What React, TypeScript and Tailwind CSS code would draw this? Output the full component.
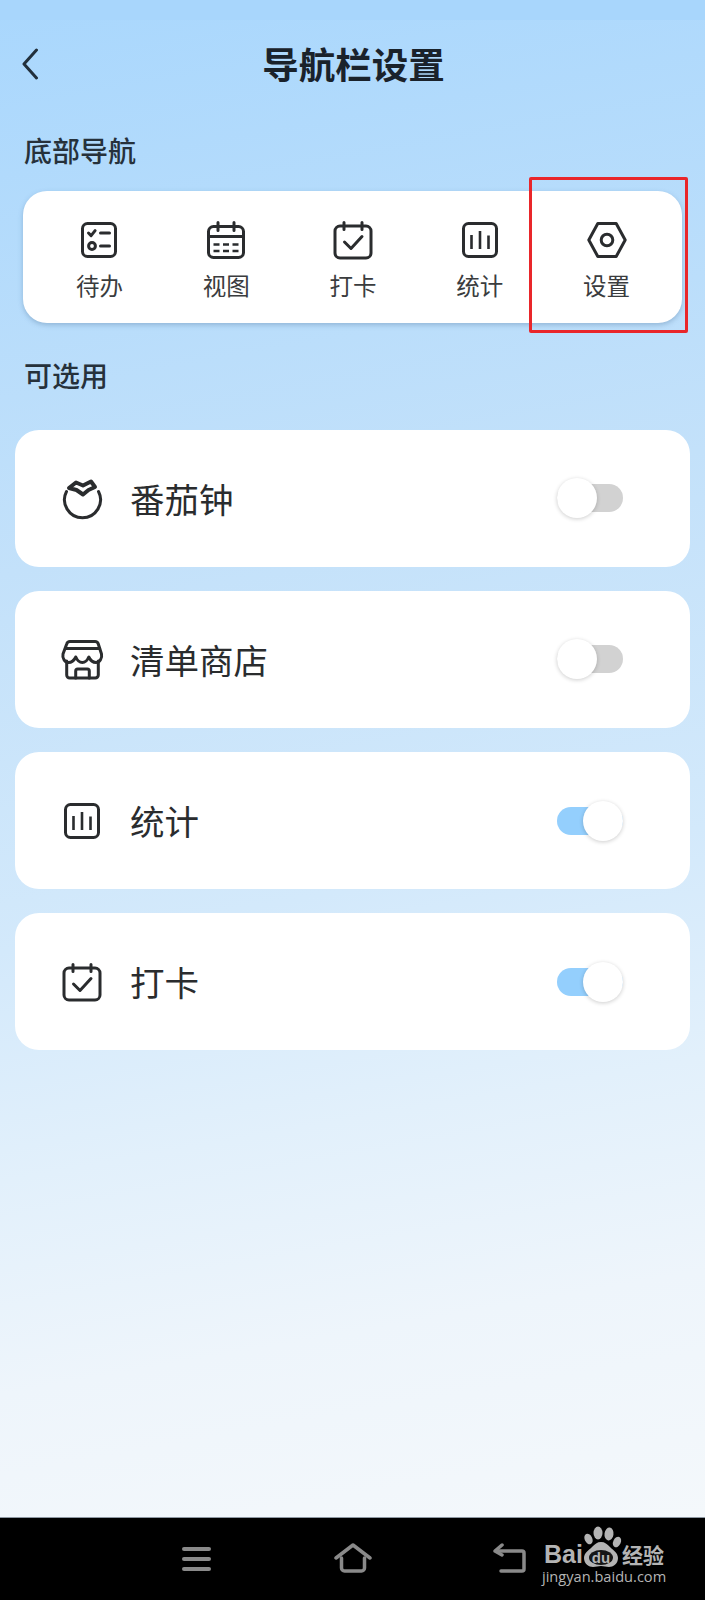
const cjk = { fontFamily: '"Noto Sans CJK SC", "Noto Sans", sans-serif' };

type IconProps = { className?: string };

function Svg({ children, className }: { children: React.ReactNode; className?: string }) {
  return (
    <svg viewBox="0 0 40 40" className={className ?? "h-10 w-10 overflow-visible"} fill="none" stroke="#2a2c2e" strokeWidth={3} strokeLinecap="round" strokeLinejoin="round">
      {children}
    </svg>
  );
}

function TasksIcon({ className }: IconProps) {
  return (
    <Svg className={className}>
      <rect x="3.5" y="3.5" width="33" height="33" rx="5" />
      <path d="M9.5 13l2.6 2.6 4-5" />
      <path d="M21.5 13h9M21.5 26h9" />
      <circle cx="13" cy="26" r="3.4" />
    </Svg>
  );
}

function CalendarIcon({ className }: IconProps) {
  return (
    <Svg className={className}>
      <rect x="2.5" y="6.5" width="35" height="31" rx="5" />
      <path d="M12 2.5v8M28 2.5v8" />
      <path d="M3 16.5h34" />
      <path d="M7.500 24.500h6M17 24.500h6M26.500 24.500h6M7.500 31h6M17 31h6M26.500 31h6" strokeLinecap="butt" strokeWidth={2.6} />
    </Svg>
  );
}

function CheckIcon({ className }: IconProps) {
  return (
    <Svg className={className}>
      <rect x="2" y="6" width="36" height="32" rx="5" />
      <path d="M11 2.5v7M29 2.5v7" />
      <path d="M11.500 22l6.500 6.500L29 16.500" />
    </Svg>
  );
}

function StatsIcon({ className }: IconProps) {
  return (
    <Svg className={className}>
      <rect x="3.5" y="3.5" width="33" height="33" rx="5" />
      <path d="M11.500 15v14M20 11v18M28.500 15.500v13.500" strokeWidth={2.6} strokeLinecap="butt" />
    </Svg>
  );
}

function HexIcon({ className }: IconProps) {
  return (
    <Svg className={className}>
      <path d="M1.800 20L10.800 3.500h18.400L38.200 20l-9 16.500H10.800z" />
      <circle cx="20" cy="20" r="5.800" />
    </Svg>
  );
}

function TomatoIcon({ className }: IconProps) {
  return (
    <Svg className={className}>
      <path d="M4.500 12.500A18 18 0 1 0 36.500 12.500" />
      <path d="M7 9L14 3.500 21 6.500 29 2.500 33 8 26.500 11 21 15.500 14.500 11z" fill="#fff" strokeWidth={4} />
    </Svg>
  );
}

function StoreIcon({ className }: IconProps) {
  return (
    <Svg className={className}>
      <path d="M4.700 21V35a3 3 0 0 0 3 3h25.600a3 3 0 0 0 3-3V21" />
      <path d="M8 1.500H33a3.500 3.500 0 0 1 3.300 2.500L39.500 14c1 4.500-2 8.500-5.500 8.500-3 0-5.500-2-7.200-5.500-1.500 3.500-3.800 5.500-6.500 5.500s-5-2-6.500-5.500C12 20.500 9.500 22.500 6.500 22.500 3 22.500 0 18.500 1 14L4.700 4A3.500 3.500 0 0 1 8 1.500z" />
      <path d="M3.500 8.500H37.500" />
      <path d="M13.700 38V31a2 2 0 0 1 2-2h9.600a2 2 0 0 1 2 2V38" />
    </Svg>
  );
}

function Toggle({ on }: { on: boolean }) {
  return (
    <div className={`relative h-10 w-[66px] shrink-0 ${on ? "mt-0" : "-mt-[2px]"}`}>
      <div className={`absolute inset-x-0 top-[6px] h-7 rounded-full ${on ? "bg-[#94cffd]" : "bg-[#d2d2d2]"}`} />
      <div className={`absolute top-0 h-10 w-10 rounded-full bg-white shadow-[0_1px_4px_rgba(0,0,0,0.2)] ${on ? "right-0" : "left-0"}`} />
    </div>
  );
}

function OptionRow({ icon, label, on }: { icon: React.ReactNode; label: string; on: boolean }) {
  return (
    <div className="flex h-[137px] items-center rounded-[24px] bg-white pl-[47px] pr-[67px]">
      <div className="h-10 w-10 shrink-0">{icon}</div>
      <span className="-mt-[2px] ml-[28px] flex-1 text-[34.5px] leading-[44px] text-[#2a2c2e]">{label}</span>
      <Toggle on={on} />
    </div>
  );
}

const navItems = [
  { label: "待办", icon: <TasksIcon /> },
  { label: "视图", icon: <CalendarIcon /> },
  { label: "打卡", icon: <CheckIcon /> },
  { label: "统计", icon: <StatsIcon /> },
  { label: "设置", icon: <HexIcon /> },
];

function BaiduMark() {
  return (
    <div className="absolute left-[541px] top-[7px] h-[66px] w-[130px] text-[#b4b4b4]">
      <span className="absolute left-[3px] top-[16px] text-[25px] font-bold leading-[26px]" style={{ fontFamily: '"Liberation Sans", sans-serif' }}>Bai</span>
      <svg viewBox="0 0 40 44" className="absolute left-[42px] top-0 h-[44px] w-[40px]">
        <g fill="#b4b4b4">
          <ellipse cx="15" cy="8" rx="4.500" ry="6.500" />
          <ellipse cx="26" cy="9" rx="4.500" ry="6.500" transform="rotate(8 26 9)" />
          <ellipse cx="5.500" cy="14" rx="3.800" ry="5.500" transform="rotate(-25 5.500 14)" />
          <ellipse cx="34" cy="17" rx="3.800" ry="5.500" transform="rotate(25 34 17)" />
          <path d="M18 17c4 0 6 2 9 5 3 3 8 6 8 11 0 6-5 9-9 9-3 0-5-1-8-1s-5 1-8 1c-4 0-9-3-9-9 0-5 5-8 8-11 3-3 5-5 9-5z" />
        </g>
        <ellipse cx="18" cy="32.500" rx="12" ry="7.500" fill="#161616" />
        <text x="18" y="37.500" textAnchor="middle" fontSize="15" fontWeight="700" fill="#b4b4b4" fontFamily="Liberation Sans, sans-serif">du</text>
      </svg>
      <span className="absolute left-[81px] top-[16px] text-[21px] font-bold leading-[26px]" style={cjk}>经验</span>
      <span className="absolute left-px top-[41px] text-[14.6px] leading-[20px]" style={{ fontFamily: '"Open Sans", sans-serif' }}>jingyan.baidu.com</span>
    </div>
  );
}

export default function App() {
  return (
    <div className="relative flex h-[1600px] w-[705px] flex-col overflow-hidden" style={cjk}>
      <main className="flex flex-1 flex-col bg-[linear-gradient(170deg,#a9d7fd_0%,#c3e1fa_35%,#d3e9fb_58%,#e2f0fb_72%,#eef5fb_85%,#f4f8fb_100%)]">
        <div className="h-5 bg-[#a8d6fc]" />
        <header className="relative flex h-[90px] items-center justify-center">
          <svg viewBox="0 0 18 32" className="absolute left-[21px] top-[28px] h-8 w-[18px]" fill="none" stroke="#22303c" strokeWidth={3} strokeLinecap="round" strokeLinejoin="round">
            <path d="M15.500 2L3 16l12.500 14" />
          </svg>
          <h1 className="-mt-[2px] ml-[2px] text-[36.5px] font-bold leading-[48px] text-[#1a222b]">导航栏设置</h1>
        </header>
        <h2 className="ml-6 mt-[20px] text-[28px] font-medium leading-[40px] text-[#26313b]">底部导航</h2>
        <section className="relative ml-[23px] mt-[21px] grid h-[132px] w-[659px] grid-cols-5 rounded-[24px] bg-white pl-[13px] pr-[12px] pt-[29px] shadow-[0_2px_5px_rgba(70,110,150,0.35)]">
          {navItems.map((item) => (
            <div key={item.label} className="flex flex-col items-center">
              {item.icon}
              <span className="mt-[9px] text-[23.5px] leading-[32px] text-[#3a3c3e]">{item.label}</span>
            </div>
          ))}
        </section>
        <h2 className="ml-6 mt-[32px] text-[28px] font-medium leading-[40px] text-[#26313b]">可选用</h2>
        <div className="mx-[15px] mt-[35px] flex flex-col gap-6">
          <OptionRow icon={<TomatoIcon />} label="番茄钟" on={false} />
          <OptionRow icon={<StoreIcon />} label="清单商店" on={false} />
          <OptionRow icon={<StatsIcon />} label="统计" on />
          <OptionRow icon={<CheckIcon />} label="打卡" on />
        </div>
      </main>
      <footer className="relative h-[83px] border-t border-[#8e98a2] bg-black">
        <div className="absolute left-[182px] top-[29px] flex w-[29px] flex-col gap-[6px]">
          <div className="h-1 rounded-full bg-[#8a8a8a]" />
          <div className="h-1 rounded-full bg-[#8a8a8a]" />
          <div className="h-1 rounded-full bg-[#8a8a8a]" />
        </div>
        <svg viewBox="0 0 38 30" className="absolute left-[334px] top-[25px] h-[30px] w-[38px]" fill="none" stroke="#8a8a8a" strokeWidth={3.5} strokeLinecap="round" strokeLinejoin="round">
          <path d="M2 15L19 2l17 13" />
          <path d="M7.500 15v10a3 3 0 0 0 3 3h17a3 3 0 0 0 3-3V15" />
        </svg>
        <svg viewBox="0 0 34 30" className="absolute left-[493px] top-[25px] h-[30px] w-[34px]" fill="none" stroke="#8a8a8a" strokeWidth={3.5} strokeLinecap="round" strokeLinejoin="round">
          <path d="M9 2L2 8l7 4" />
          <path d="M3 8h26a2 2 0 0 1 2 2v16a2 2 0 0 1-2 2H8" />
        </svg>
        <BaiduMark />
      </footer>
      <div className="absolute left-[529px] top-[177px] h-[156px] w-[159px] rounded-[2px] border-[3px] border-[#e9262a]" />
    </div>
  );
}
